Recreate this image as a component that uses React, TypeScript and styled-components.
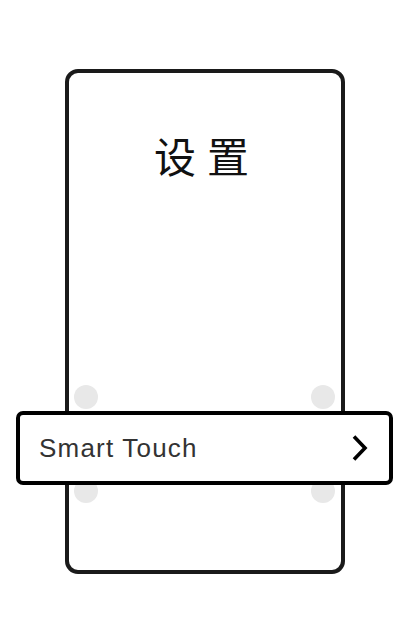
import React from "react";
import styled, { createGlobalStyle } from "styled-components";

const GlobalStyle = createGlobalStyle`
  html, body {
    margin: 0;
    padding: 0;
    background: #ffffff;
  }
  body {
    font-family: "Liberation Sans", "Noto Sans CJK SC", sans-serif;
  }
`;

const Page = styled.div`
  width: 414px;
  height: 632px;
  padding: 69px 0 0 65px;
  box-sizing: border-box;
`;

const Phone = styled.div`
  width: 280px;
  height: 505px;
  box-sizing: border-box;
  border: 4px solid #1a1a1a;
  border-radius: 13px;
  display: flex;
  flex-direction: column;
`;

const Title = styled.h1`
  margin: 61px 0 0;
  font-family: "Noto Sans CJK SC", sans-serif;
  font-weight: 400;
  font-size: 42px;
  line-height: 42px;
  letter-spacing: 11px;
  padding-left: 4px;
  text-align: center;
  color: #111111;
`;

const DotRow = styled.div<{ $overlap?: boolean }>`
  display: flex;
  justify-content: space-between;
  padding: 0 6px 0 5px;
  margin-top: ${(p) => (p.$overlap ? "-6px" : "auto")};
  margin-bottom: ${(p) => (p.$overlap ? "0" : "2px")};
`;

const Dot = styled.span`
  width: 24px;
  height: 24px;
  border-radius: 50%;
  background: #e8e8e8;
`;

const Spacer = styled.div`
  height: 67px;
`;

const Card = styled.div`
  position: relative;
  z-index: 1;
  height: 74px;
  box-sizing: border-box;
  margin: 0 -52px 0 -53px;
  padding: 0 20px 0 19px;
  border: 4px solid #000000;
  border-radius: 7px;
  background: #ffffff;
  display: flex;
  align-items: center;
  justify-content: space-between;
`;

const Label = styled.span`
  font-family: "Liberation Sans", sans-serif;
  font-size: 26px;
  letter-spacing: 1.2px;
  color: #333333;
`;

const Chevron = () => (
  <svg width="18" height="28" viewBox="0 0 18 28" fill="none">
    <polyline
      points="3,2.5 14,14 3,25.5"
      stroke="#000"
      strokeWidth="3.6"
      strokeLinejoin="miter"
    />
  </svg>
);

export default function App() {
  return (
    <>
      <GlobalStyle />
      <Page>
        <Phone>
          <Title>设置</Title>
          <DotRow>
            <Dot />
            <Dot />
          </DotRow>
          <Card>
            <Label>Smart Touch</Label>
            <Chevron />
          </Card>
          <DotRow $overlap>
            <Dot />
            <Dot />
          </DotRow>
          <Spacer />
        </Phone>
      </Page>
    </>
  );
}
